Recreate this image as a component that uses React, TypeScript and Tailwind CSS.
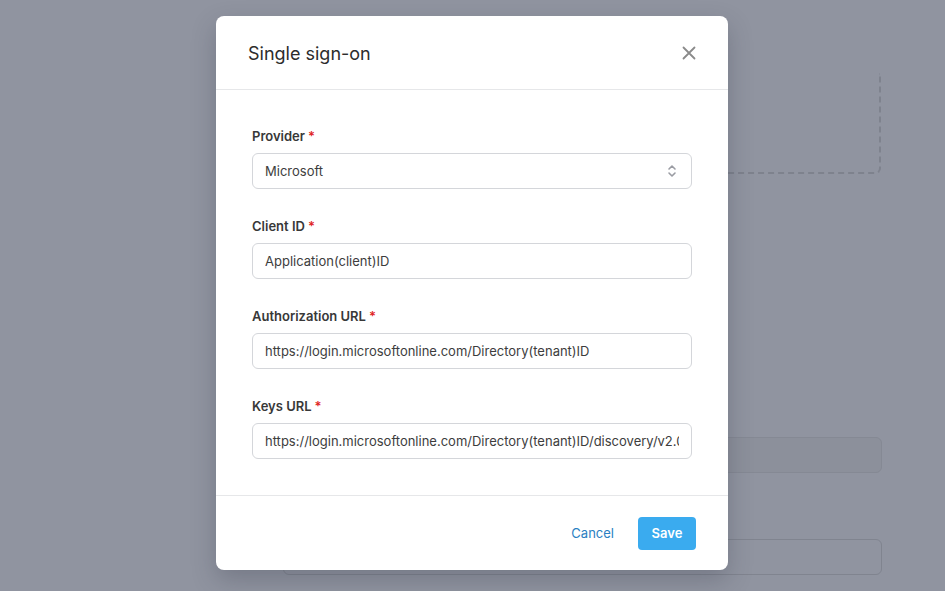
import React from "react";

const font = { fontFamily: "Inter, 'Noto Sans', sans-serif" };

function Field({ label, value, select }: { label: string; value: string; select?: boolean }) {
  return (
    <div className="flex flex-col">
      <div className="h-5 pt-[2px] flex items-center text-[13px] font-semibold text-[#383838]">
        {label}
        <span className="ml-[3px] text-[#e02424]">*</span>
      </div>
      <div className="mt-[7px] h-9 flex items-center rounded-md border border-[#d4d6da] bg-white pl-3 pr-3 overflow-hidden">
        <span className="flex-1 whitespace-nowrap overflow-hidden text-[13px] text-[#3d3d3d] pt-[1px]">{value}</span>
        {select && (
          <svg width="12" height="16" viewBox="0 0 12 16" fill="none" stroke="#9a9ca3" strokeWidth="1.6" strokeLinecap="round" strokeLinejoin="round" className="shrink-0 mr-[1px]">
            <path d="M3 6 L6 3 L9 6" />
            <path d="M3 10 L6 13 L9 10" />
          </svg>
        )}
      </div>
    </div>
  );
}

export default function App() {
  return (
    <div className="relative w-[945px] h-[591px] overflow-hidden bg-[#9094a0]" style={font}>
      {/* background page content */}
      <div className="absolute left-[283px] top-[73px] w-[598px] h-[101px] border-r-2 border-b-2 border-dashed border-[#7e828d] rounded-br-md" />
      <div className="absolute left-[283px] top-[437px] w-[599px] h-[36px] rounded-md border border-[#858994] bg-[#8c909b]" />
      <div className="absolute left-[283px] top-[539px] w-[599px] h-[36px] rounded-md border border-[#80848f] bg-[#9094a0]" />

      {/* modal */}
      <div className="absolute left-[216px] top-[16px] w-[512px] h-[554px] bg-white rounded-lg shadow-[0_10px_25px_rgba(40,44,60,0.25)] flex flex-col">
        <div className="h-[74px] flex items-center justify-between pl-8 pr-8 border-b border-[#e6e7e9] shrink-0">
          <div className="text-[18px] text-[#2c2c2c] pt-[1px]">Single sign-on</div>
          <svg width="14" height="14" viewBox="0 0 14 14" stroke="#8a8a8a" strokeWidth="1.8" strokeLinecap="round">
            <path d="M1.5 1.5 L12.5 12.5 M12.5 1.5 L1.5 12.5" />
          </svg>
        </div>
        <div className="flex-1 px-9 pt-[36px] flex flex-col gap-[27px]">
          <Field label="Provider" value="Microsoft" select />
          <Field label="Client ID" value="Application(client)ID" />
          <Field label="Authorization URL" value="https://login.microsoftonline.com/Directory(tenant)ID" />
          <Field label="Keys URL" value="https://login.microsoftonline.com/Directory(tenant)ID/discovery/v2.0/keys" />
        </div>
        <div className="h-[75px] shrink-0 border-t border-[#e6e7e9] flex items-center justify-end pr-8 gap-3">
          <button className="h-[33px] px-3 text-[13px] text-[#2b7fc2] pt-[1px]">Cancel</button>
          <button className="h-[33px] w-[58px] rounded-[4px] bg-[#3aabef] text-[13px] font-semibold text-white pt-[1px]">Save</button>
        </div>
      </div>
    </div>
  );
}
